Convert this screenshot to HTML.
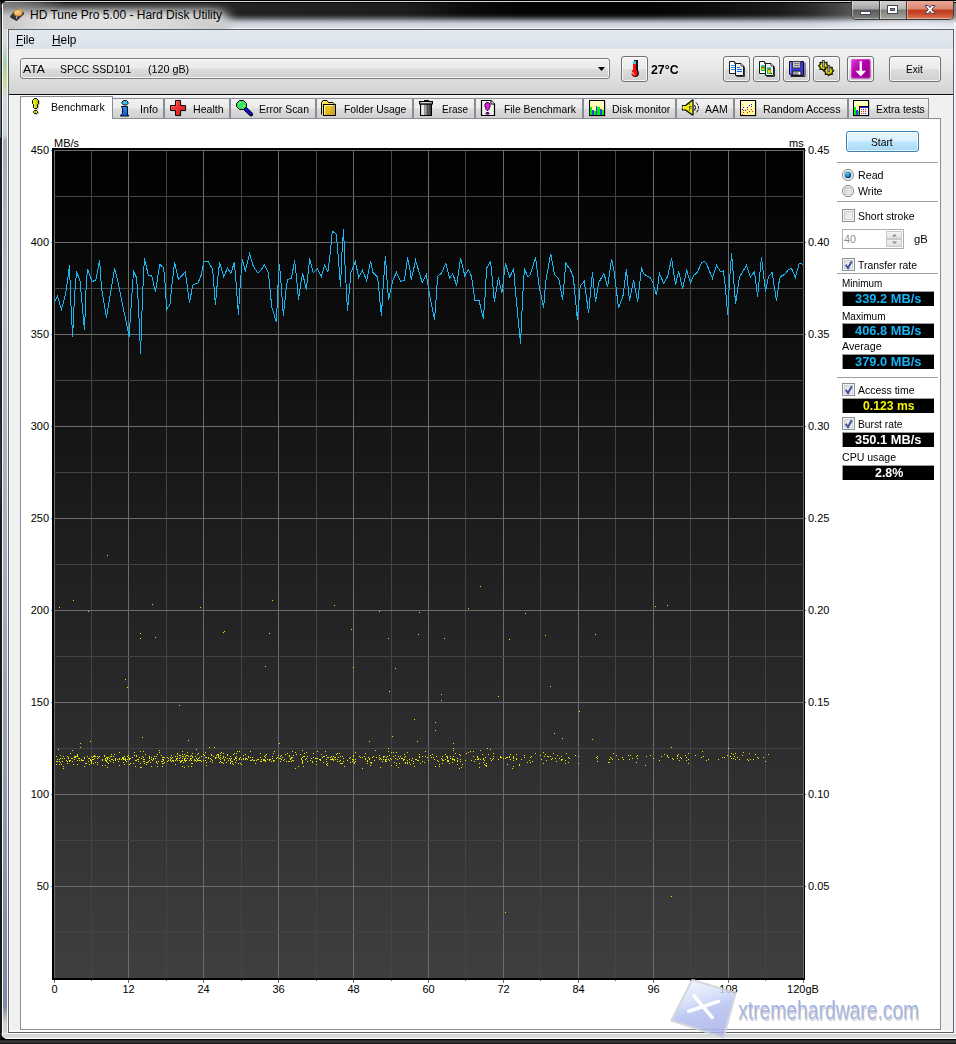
<!DOCTYPE html>
<html><head><meta charset="utf-8"><title>HD Tune Pro 5.00 - Hard Disk Utility</title>
<style>
*{box-sizing:border-box;margin:0;padding:0}
html,body{width:956px;height:1044px;overflow:hidden;background:#000}
body{position:relative;font-family:"Liberation Sans",sans-serif;font-size:11px;color:#000}
.a{position:absolute}
div{position:absolute;white-space:nowrap}
.ax{font-size:11px;line-height:14px;height:14px;color:#000}
.t{font-size:11px;line-height:13px;color:#000;letter-spacing:-0.15px}
.sep{height:1px;background:#a0a0a0;left:837px;width:101px}
.bb{left:842px;width:92px;height:15px;border-top:1px solid #9a9a9a;border-left:1px solid #9a9a9a;background:#000;text-align:center;font-weight:bold;font-size:12px;line-height:15px;letter-spacing:0.35px}
.cb{left:842px;width:13px;height:13px;border:1px solid #8e8f8f;background:#f4f4f4}
.cb i{position:absolute;left:1px;top:1px;width:9px;height:9px;border:1px solid #cfd0d0;background:linear-gradient(135deg,#dcdfe2,#f6f6f6)}
.tb{top:56px;width:27px;height:26px;border:1px solid #707070;border-radius:3px;background:linear-gradient(#f2f2f2 0,#ebebeb 48%,#dddddd 52%,#cfcfcf 100%);box-shadow:inset 0 0 0 1px rgba(255,255,255,.75)}
.tab{top:98px;height:20px;border:1px solid #898c95;border-bottom:none;background:linear-gradient(#f2f2f2 0,#ebebeb 48%,#dddddd 52%,#cfcfcf 100%)}
.tab span{position:absolute;top:3px;font-size:11px;line-height:13px;letter-spacing:-0.2px}
.tab svg{position:absolute;top:1px}
</style></head><body>

<!-- window glass frame -->
<div id="frame" style="left:1px;top:1px;width:970px;height:1038px;border-radius:7px 0 0 7px;background:#d4d6da;overflow:hidden">
  <!-- left border glass -->
  <div style="left:0;top:0;width:8px;height:1038px;background:linear-gradient(#cfcfcf 0,#d9dcd9 40px,#a9cfae 62px,#c9da8c 78px,#d3d8e2 98px,#cdd5e1 133px,#a6aebe 140px,#a9b1c0 175px,#b4bccb 300px,#aab2c2 520px,#8f99ad 840px,#7f8aa0 1005px,#d0d0d0 1022px,#d8d8d8 1038px)"></div>
  <div style="left:0;top:0;width:1px;height:1038px;background:#1c1c1c"></div>
  <div style="left:1px;top:0;width:1px;height:1038px;background:#fbfbfb"></div>
  <div style="left:6px;top:28px;width:1px;height:1004px;background:#f4f6f8"></div>
  <!-- title bar -->
  <div style="left:2px;top:0;width:968px;height:28px;background:linear-gradient(180deg,#d2d2d2 0,#d2d2d2 1px,#070707 1px,#070707 2px,rgba(0,0,0,0) 2px,rgba(0,0,0,0) 12.500px,rgba(208,214,225,.08) 14.500px,rgba(208,214,225,.38) 17.500px,rgba(208,214,225,.72) 20px,rgba(210,216,227,.95) 22.500px,#d4d9e3 25px,#d9dee7 27px,#f2f5f8 27px,#f2f5f8 28px),linear-gradient(90deg,#222 0,#222 250px,#1d1d1d 400px,#0b0b0b 468px,#040404 520px,#040404 650px,#0f0f0f 720px,#1a1a1a 775px,#2c2c2c 810px,#555 849px,#6a6a6a 870px,#8a8a8a 956px)"></div>
  <div style="left:790px;top:15px;width:180px;height:12px;background:radial-gradient(ellipse 100px 11px at 115px 12px,rgba(255,255,255,.6),rgba(255,255,255,.35) 55%,rgba(255,255,255,0) 100%)"></div>
  <!-- title text glow -->
  <svg class="a" style="left:2px;top:1px" width="300" height="27" viewBox="0 0 300 27"><defs><filter id="gb" x="-20%" y="-100%" width="140%" height="300%"><feGaussianBlur stdDeviation="6 4.6"/></filter><linearGradient id="gl" x1="0" y1="0" x2="1" y2="0"><stop offset="0" stop-color="#c2c2c2"/><stop offset=".14" stop-color="#c8c8c8"/><stop offset=".3" stop-color="#e2e2e2"/><stop offset=".6" stop-color="#e2e2e2"/><stop offset="1" stop-color="#cccccc"/></linearGradient></defs>
    <rect x="-30" y="8" width="256" height="44" rx="10" fill="url(#gl)" filter="url(#gb)"/>
    <rect x="-30" y="10" width="246" height="44" rx="10" fill="url(#gl)" opacity=".6" filter="url(#gb)"/>
  </svg>
  <div style="left:2px;top:1px;width:70px;height:14px;background:radial-gradient(ellipse 60px 13px at 4px 0,rgba(200,200,200,.55),rgba(200,200,200,.3) 55%,rgba(200,200,200,0) 100%)"></div>
  <div style="left:2px;top:0;width:968px;height:1px;background:#d8d8d8"></div>
  <!-- bottom glass -->
  <div style="left:2px;top:1032px;width:968px;height:6px;background:linear-gradient(#fafafa 0,#fafafa 1px,#d2d2d2 1px,#dedede 5px,#fdfdfd 5px)"></div>
</div>
<div style="left:0;top:1040px;width:956px;height:4px;background:linear-gradient(#2b2b2b,#3a3a3a 50%,#111)"></div>
<div style="left:0;top:2px;width:1px;height:1038px;background:linear-gradient(#3a3a3a 0,#6e737a 30px,#6a7078 135px,#1e1e1e 136px,#262626 400px,#3c3c3c 470px,#161616 520px,#161616 1038px)"></div>

<!-- title icon + text -->
<svg class="a" style="left:8px;top:6px" width="20" height="18" viewBox="8 6 20 18">
  <path d="M10.200 16.200 L16.400 9.300 L24 12.700 L23.600 14.400 L16.600 20.900 L10.400 17.600z" fill="#26262c"/>
  <path d="M10.200 16.200 L16.400 9.300 L24 12.700 L16.800 19.300z" fill="#3a3a42"/>
  <ellipse cx="18.100" cy="12.800" rx="4.100" ry="3.300" fill="#f2b24e"/>
  <ellipse cx="17.300" cy="12.200" rx="2.300" ry="1.700" fill="#fbd58a" opacity=".7"/>
  <ellipse cx="18.100" cy="12.800" rx="4.100" ry="3.300" fill="none" stroke="#c98a30" stroke-width=".6"/>
  <ellipse cx="18" cy="12.600" rx="1.200" ry=".95" fill="#c9cbe0"/>
  <path d="M15.700 18.900 L16.300 15.900 L17.500 16.300 L17 19.300z" fill="#a8a0a6"/>
</svg>

<!-- caption buttons -->
<div style="left:851px;top:1px;width:103px;height:19px;border:1px solid #3a3a3a;border-top:none;border-radius:0 0 5px 5px;overflow:hidden;background:#888">
  <div style="left:0;top:0;width:28px;height:18px;background:linear-gradient(#c9c9c9 0,#a4a4a4 8px,#5b5b5b 9px,#7d7d7d 18px);border-right:1px solid #3d3d3d;box-shadow:inset 1px 0 0 rgba(255,255,255,.45),inset 0 -1px 0 rgba(255,255,255,.35)"></div>
  <div style="left:28px;top:0;width:27px;height:18px;background:linear-gradient(#d2d2d0 0,#b4b4b0 8px,#7f7f7a 9px,#a5a5a0 18px);border-right:1px solid #3d3d3d;box-shadow:inset 1px 0 0 rgba(255,255,255,.45),inset 0 -1px 0 rgba(255,255,255,.35)"></div>
  <div style="left:55px;top:0;width:47px;height:18px;background:linear-gradient(#eba898 0,#dc8872 8px,#c23a1e 9px,#c84a2c 13px,#dc7a56 18px);box-shadow:inset 1px 0 0 rgba(255,255,255,.4),inset -1px 0 0 rgba(255,255,255,.3),inset 0 -1px 0 rgba(255,255,255,.4)"></div>
</div>
<svg class="a" style="left:851px;top:1px" width="103" height="19" viewBox="0 0 103 19">
  <rect x="9.5" y="10.5" width="10" height="3" fill="#fff" stroke="#45475a" stroke-width="1"/>
  <rect x="36.500" y="4.500" width="10" height="8" fill="#fff" stroke="#45475a" stroke-width="1"/>
  <rect x="39.500" y="7.500" width="4" height="2" fill="#8a8a86" stroke="#45475a" stroke-width="1"/>
  <path d="M74 4.500h3.300l1.700 2.200 1.700-2.200h3.300l-3.300 4 3.300 4h-3.300l-1.700-2.200-1.700 2.200h-3.300l3.300-4z" fill="#fff" stroke="#45475a" stroke-width="1"/>
</svg>

<div style="left:954px;top:22px;width:2px;height:1011px;background:linear-gradient(90deg,#f6f8fb 0,#f6f8fb 1px,#e4e8ee 1px)"></div>
<!-- client area -->
<div style="left:8px;top:29px;width:946px;height:1004px;background:#5e6268"></div>
<div id="client" style="left:9px;top:30px;width:944px;height:1002px;background:#f0f0f0"></div>
<div style="left:9px;top:1030px;width:944px;height:2px;background:#fbfbfb"></div>
<div style="left:9px;top:96px;width:1px;height:936px;background:rgba(255,255,255,.75)"></div>
<!-- menu -->
<div style="left:9px;top:30px;width:944px;height:19px;background:linear-gradient(#e3e8ef 0,#dfe5ed 60%,#dce2eb 100%)"></div>
<!-- toolbar -->
<div style="left:9px;top:49px;width:944px;height:45px;background:linear-gradient(#f1f1f1 0,#ececec 30%,#dbdbdb 75%,#d2d2d2 100%)"></div>
<div style="left:9px;top:94px;width:944px;height:1px;background:#0c0c0c"></div>
<div style="left:9px;top:95px;width:944px;height:1px;background:#fafafa"></div>

<!-- combo -->
<div style="left:20px;top:58px;width:590px;height:21px;border:1px solid #7d7d7d;border-radius:3px;background:linear-gradient(#f2f2f2 0,#ebebeb 48%,#dddddd 52%,#cfcfcf 100%);box-shadow:inset 0 0 0 1px rgba(255,255,255,.8)"></div>
<svg class="a" style="left:597px;top:66px" width="9" height="6"><path d="M1 1h7l-3.500 4z" fill="#000"/></svg>

<!-- temp button -->
<div class="tb" style="left:621px"></div>

<!-- toolbar buttons -->
<div class="tb" style="left:723px"></div>
<div class="tb" style="left:753px"></div>
<div class="tb" style="left:783px"></div>
<div class="tb" style="left:813px"></div>
<div class="tb" style="left:847px"></div>
<div class="tb" style="left:889px;width:52px"></div>
<svg class="a" style="left:600px;top:50px" width="356" height="40" viewBox="600 50 356 40">
<defs><linearGradient id="pg" x1="0" y1="0" x2="1" y2="1"><stop offset="0" stop-color="#e040d8"/><stop offset=".45" stop-color="#b400ac"/><stop offset="1" stop-color="#8c0088"/></linearGradient></defs>
<g><rect x="634" y="60" width="4" height="12" fill="#141414"/><circle cx="635.300" cy="73.300" r="3.700" fill="#141414"/><rect x="633" y="61" width="3" height="3" fill="#38ccd8"/><rect x="633" y="64" width="3" height="7" fill="#ee1010"/><circle cx="634.400" cy="73" r="3.200" fill="#ee1010"/><rect x="631" y="71" width="1" height="3" fill="#8adfe6"/><path d="M632.600 72.200q.3 1.800 2 2.100" stroke="#fff" stroke-width="1" fill="none"/></g>
<g transform="translate(729 61)"><path d="M7.500 15.500h8v-10" fill="none" stroke="#3a3a3a" stroke-width="1"/><path d="M0.500 0.500h5l2 2v10h-7z" fill="#fdfdfd" stroke="#161616" stroke-width="1"/><path d="M5.500 0.500v2h2" fill="#ddd" stroke="#161616" stroke-width=".8"/><g shape-rendering="crispEdges"><rect x="2" y="4" width="4" height="1" fill="#1e90ff"/><rect x="2" y="6" width="4" height="1" fill="#1e90ff"/><rect x="2" y="8" width="4" height="1" fill="#1e90ff"/></g><path d="M6.500 2.500h5.500l2.500 2.500v9.500h-8z" fill="#efefef" stroke="#161616" stroke-width="1"/><path d="M12 2.500v2.500h2.500" fill="#fff" stroke="#161616" stroke-width=".8"/><g shape-rendering="crispEdges"><rect x="8" y="6" width="3" height="1" fill="#0a64ff"/><rect x="8" y="8" width="5" height="1" fill="#0a64ff"/><rect x="8" y="10" width="5" height="1" fill="#0a64ff"/></g></g>
<g transform="translate(759 61)"><path d="M7.500 15.500h8v-10" fill="none" stroke="#3a3a3a" stroke-width="1"/><path d="M0.500 0.500h5l2 2v10h-7z" fill="#fdfdfd" stroke="#161616" stroke-width="1"/><path d="M5.500 0.500v2h2" fill="#ddd" stroke="#161616" stroke-width=".8"/><g shape-rendering="crispEdges"><rect x="2" y="4" width="4" height="1" fill="#28c8f0"/><rect x="2" y="5" width="4" height="5" fill="#28c838"/><rect x="3" y="6" width="2" height="1" fill="#e81818"/><rect x="3" y="7" width="2" height="2" fill="#e8d818"/></g><path d="M6.500 2.500h5.500l2.500 2.500v9.500h-8z" fill="#efefef" stroke="#161616" stroke-width="1"/><path d="M12 2.500v2.500h2.500" fill="#fff" stroke="#161616" stroke-width=".8"/><g shape-rendering="crispEdges"><rect x="8" y="6" width="4" height="1" fill="#28c8f0"/><rect x="8" y="7" width="4" height="6" fill="#28c838"/><rect x="9" y="8" width="2" height="1" fill="#e81818"/><rect x="9" y="9" width="2" height="3" fill="#e8d818"/><rect x="12" y="12" width="1" height="1" fill="#000"/></g></g>
<g><path d="M790.500 76.500h14.500v-14" fill="none" stroke="#2a2a2a" stroke-width="1"/><path d="M789.500 61.500h14v14h-12.500l-1.500-1.500z" fill="#3434fa" stroke="#0c0c20" stroke-width="1"/><rect x="790" y="62" width="1.200" height="11" fill="#8a8aff"/><rect x="792.500" y="61.500" width="8" height="6.500" fill="#c6c6c6" stroke="#3a3a3a" stroke-width="1"/><path d="M794 63.500h5.500M794 65.500h5.500" stroke="#7c7c7c" stroke-width="1"/><rect x="792.500" y="71" width="8.500" height="4" fill="#9c9c9c" stroke="#1c1c1c" stroke-width=".8"/><rect x="798.500" y="72" width="1.600" height="2.600" fill="#fff"/></g>
<g><polygon points="828.40,65.80 826.73,67.14 826.96,69.26 824.84,69.03 823.50,70.70 822.16,69.03 820.04,69.26 820.27,67.14 818.60,65.80 820.27,64.46 820.04,62.34 822.16,62.57 823.50,60.90 824.84,62.57 826.96,62.34 826.73,64.46" fill="#ecec10" stroke="#1a1a00" stroke-width="1.300" stroke-linejoin="round"/><polygon points="833.70,70.80 832.03,72.14 832.26,74.26 830.14,74.03 828.80,75.70 827.46,74.03 825.34,74.26 825.57,72.14 823.90,70.80 825.57,69.46 825.34,67.34 827.46,67.57 828.80,65.90 830.14,67.57 832.26,67.34 832.03,69.46" fill="#ecec10" stroke="#1a1a00" stroke-width="1.300" stroke-linejoin="round"/><rect x="822.500" y="60.500" width="2" height="6.500" fill="#a8a8a8" stroke="#333" stroke-width=".7"/><rect x="827.800" y="65.500" width="2" height="6.500" fill="#a8a8a8" stroke="#333" stroke-width=".7"/></g>
<g><rect x="851" y="59" width="19.500" height="19.500" rx="2" fill="url(#pg)"/><rect x="851.500" y="59.500" width="18.500" height="18.500" rx="2" fill="none" stroke="#f070e8" stroke-width=".8" opacity=".6"/><path d="M859.600 61.300h2.300v9.500h4.200l-5.350 5.600-5.350-5.600h4.200z" fill="#fff"/></g>
</svg>

<!-- tab pane -->
<div style="left:20px;top:118px;width:921px;height:912px;border:1px solid #898c95;background:#fff"></div>
<!-- tabs -->
<div class="tab" style="left:112px;width:52px"></div>
<div class="tab" style="left:164px;width:66px"></div>
<div class="tab" style="left:230px;width:86px"></div>
<div class="tab" style="left:316px;width:97px"></div>
<div class="tab" style="left:413px;width:62px"></div>
<div class="tab" style="left:475px;width:108px"></div>
<div class="tab" style="left:583px;width:93px"></div>
<div class="tab" style="left:676px;width:58px"></div>
<div class="tab" style="left:734px;width:114px"></div>
<div class="tab" style="left:848px;width:81px"></div>
<div class="tab" style="left:20px;top:96px;width:93px;height:23px;background:#fff"></div>
<svg class="a" style="left:0;top:90px" width="956" height="32" viewBox="0 90 956 32">
<defs><linearGradient id="gy" x1="0" y1="0" x2="1" y2="0"><stop offset="0" stop-color="#f4f430"/><stop offset=".45" stop-color="#e4e400"/><stop offset="1" stop-color="#b4b400"/></linearGradient><linearGradient id="gbl" x1="0" y1="0" x2="0" y2="1"><stop offset="0" stop-color="#1898ff"/><stop offset="1" stop-color="#0058e8"/></linearGradient><linearGradient id="grd" x1="0" y1="0" x2="1" y2="1"><stop offset="0" stop-color="#ff4848"/><stop offset="1" stop-color="#d41818"/></linearGradient><linearGradient id="gfo" x1="0" y1="0" x2="1" y2="1"><stop offset="0" stop-color="#f2d428"/><stop offset="1" stop-color="#d89c10"/></linearGradient><linearGradient id="gtr" x1="0" y1="0" x2="1" y2="0"><stop offset="0" stop-color="#b4b4b4"/><stop offset=".22" stop-color="#fafafa"/><stop offset=".5" stop-color="#8e8e8e"/><stop offset="1" stop-color="#2a2a2a"/></linearGradient><linearGradient id="gyl" x1="0" y1="0" x2="0" y2="1"><stop offset="0" stop-color="#ffffc8"/><stop offset="1" stop-color="#fff690"/></linearGradient></defs>
<g><path d="M35.5 99.5h2l2 2v3l-1 1v3l-1 1h-2l-1-1v-3l-1-1v-3z" fill="#9a9a9a" stroke="#9a9a9a" stroke-width="1" opacity=".6"/><path d="M34.5 98.5h2l2 2v3l-1 1v3l-1 1h-2l-1-1v-3l-1-1v-3z" fill="url(#gy)" stroke="#000" stroke-width="1"/><path d="M35.5 111.5h2l1 1v1l-1 1h-2l-1-1v-1z" fill="#9a9a9a" stroke="#9a9a9a" opacity=".6"/><path d="M34.5 110.500h2l1 1v1l-1 1h-2l-1-1v-1z" fill="#d8d800" stroke="#000" stroke-width="1"/></g>
<g><path d="M123.500 100.500h3l1.500 1.500v1.500l-1.500 1.500h-3l-1.500-1.500v-1.500z" fill="#28c4f4" stroke="#1a0c00" stroke-width="1"/><path d="M121.500 106.500h6v8.500h1v1h-8v-.8l2-1.700v-5.500l-1-.7z" fill="url(#gbl)" stroke="#100800" stroke-width="1" stroke-linejoin="round"/></g>
<path d="M176.500 101.500h5v5h5v5h-5v5h-5v-5h-5v-5h5z" fill="#8a8a8a" opacity=".45"/><path d="M175.500 100.500h5v5h5v5h-5v5h-5v-5h-5v-5h5z" fill="url(#grd)" stroke="#0a0a0a" stroke-width="1"/><path d="M176.500 105.500v-4h1.500M171.500 109v-2.500h4" fill="none" stroke="#ff7a7a" stroke-width=".8" opacity=".8"/>
<g><path d="M245.500 109l5.500 5.200" stroke="#000" stroke-width="4.200" stroke-linecap="round"/><path d="M245.500 108.800l5.200 5" stroke="#1212e6" stroke-width="2.300" stroke-linecap="round"/><path d="M239.500 100.500h4l3 3v3l-3 3h-4l-3-3v-3z" fill="#38e458" stroke="#000" stroke-width="1"/><path d="M239.500 103.500l1.500-1.500M242.500 107.500l2.500-2.500" stroke="#c8ffd0" stroke-width=".9"/></g>
<g><path d="M321.500 114.500v-12l1.500-2h4l1.500 2h4.500l1 1v2" fill="#f6e45a" stroke="#000" stroke-width="1"/><rect x="323.500" y="104.500" width="12" height="11" fill="url(#gfo)" stroke="#000" stroke-width="1"/><rect x="324" y="105" width="1" height="10" fill="#fff8c0"/><rect x="324" y="105" width="11" height="1" fill="#fff0a0"/><rect x="333" y="105" width="1" height="10" fill="#a89c80"/></g>
<g><rect x="424.500" y="100.500" width="4" height="2" fill="#555" stroke="#000"/><rect x="420.500" y="104" width="11" height="11.500" fill="url(#gtr)" stroke="#000" stroke-width="1"/><rect x="419.500" y="101.500" width="13" height="2.500" fill="#9c9c9c" stroke="#000" stroke-width="1"/><rect x="421" y="102" width="9" height="1" fill="#d8d8d8"/><rect x="424" y="105" width="1" height="10" fill="#707070" opacity=".6"/><rect x="427" y="105" width="1" height="10" fill="#303030" opacity=".5"/></g>
<g><path d="M482.500 101.500h9.500l3 3v11h-12.500z" fill="#9a9a9a" opacity=".5"/><path d="M481.500 100.500h9.500l3.500 3.500v11.500h-13z" fill="#f2f2f2" stroke="#000" stroke-width="1.200"/><path d="M491 100.500v3.500h3.500" fill="#fff" stroke="#000" stroke-width="1"/><path d="M486.500 102.500h2l1.500 1.500v3l-1 1v1.500l-1 1h-1l-1-1v-1.500l-1-1v-3z" fill="#f018e0" stroke="#1a0a30" stroke-width="1"/><path d="M486.500 112.500h2l.8.800-.8.900h-2l-.8-.9z" fill="#f018e0" stroke="#1a0a30" stroke-width="1"/></g>
<g shape-rendering="crispEdges">
<rect x="590" y="101" width="16" height="16" fill="#9a9a9a" opacity=".5"/>
<rect x="589" y="100" width="16" height="16" fill="#000"/>
<rect x="590" y="101" width="14" height="14" fill="url(#gyl)"/>
<rect x="590" y="107" width="2" height="8" fill="#00f400"/>
<rect x="592" y="110" width="2" height="5" fill="#3838ff"/>
<rect x="594" y="111" width="2" height="4" fill="#00f400"/>
<rect x="596" y="106" width="1" height="9" fill="#3838ff"/>
<rect x="597" y="107" width="3" height="8" fill="#00f400"/>
<rect x="600" y="109" width="2" height="6" fill="#3838ff"/>
<rect x="602" y="110" width="2" height="5" fill="#00f400"/>
</g>
<g><path d="M682.500 105.500h3l7-5.500h.5v15h-.5l-7-5h-3z" fill="#f0ea00" stroke="#000" stroke-width="1.200" stroke-linejoin="round"/><path d="M689.500 103v9.500" stroke="#555" stroke-width=".8" stroke-dasharray="2 1"/><ellipse cx="683.300" cy="107.500" rx=".8" ry="1.800" fill="#ffffa0"/><rect x="689.500" y="106.500" width="1.500" height="2" fill="#ddd" stroke="#222" stroke-width=".5"/><path d="M694.500 105q2.200 2.500 0 5.500" fill="none" stroke="#000" stroke-width="1"/><path d="M696 102.500q5 5 0 10.500" fill="none" stroke="#000" stroke-width="1" stroke-dasharray="3 1"/></g>
<g shape-rendering="crispEdges">
<rect x="741" y="101" width="16" height="16" fill="#9a9a9a" opacity=".5"/>
<rect x="740" y="100" width="16" height="16" fill="#000"/>
<rect x="741" y="101" width="14" height="14" fill="url(#gyl)"/>
<rect x="743" y="107" width="1" height="1" fill="#1414ff"/>
<rect x="742" y="109" width="1" height="1" fill="#1414ff"/>
<rect x="745" y="110" width="1" height="1" fill="#1414ff"/>
<rect x="747" y="107" width="1" height="1" fill="#1414ff"/>
<rect x="749" y="105" width="1" height="1" fill="#1414ff"/>
<rect x="751" y="104" width="1" height="1" fill="#1414ff"/>
<rect x="751" y="106" width="1" height="1" fill="#1414ff"/>
<rect x="743" y="110" width="1" height="1" fill="#ff1414"/>
<rect x="743" y="112" width="1" height="1" fill="#ff1414"/>
<rect x="742" y="114" width="1" height="1" fill="#ff1414"/>
<rect x="747" y="109" width="1" height="1" fill="#ff1414"/>
<rect x="747" y="112" width="1" height="1" fill="#ff1414"/>
<rect x="749" y="111" width="1" height="1" fill="#ff1414"/>
<rect x="751" y="109" width="1" height="1" fill="#ff1414"/>
<rect x="752" y="111" width="1" height="1" fill="#ff1414"/>
</g>
<g shape-rendering="crispEdges">
<rect x="854" y="101" width="16" height="16" fill="#9a9a9a" opacity=".5"/>
<rect x="853" y="100" width="16" height="16" fill="#000"/>
<rect x="854" y="101" width="14" height="14" fill="url(#gyl)"/>
<rect x="854" y="107" width="2" height="8" fill="#00f400"/>
<rect x="856" y="110" width="2" height="5" fill="#3838ff"/>
<rect x="858" y="111" width="1" height="4" fill="#00f400"/>
<rect x="859" y="106" width="10" height="10" fill="#000"/>
<rect x="860" y="107" width="8" height="1" fill="#1c1cf0"/>
<rect x="860" y="108" width="8" height="7" fill="#f4f4f4"/>
<rect x="861" y="109" width="1" height="1" fill="#ff1414"/>
<rect x="863" y="109" width="1" height="1" fill="#1414ff"/>
<rect x="865" y="109" width="1" height="1" fill="#ff1414"/>
<rect x="861" y="111" width="1" height="1" fill="#14c814"/>
<rect x="863" y="111" width="1" height="1" fill="#ff1414"/>
<rect x="865" y="111" width="1" height="1" fill="#ff1414"/>
<rect x="861" y="113" width="1" height="1" fill="#ff1414"/>
<rect x="863" y="113" width="1" height="1" fill="#ff1414"/>
<rect x="865" y="113" width="1" height="1" fill="#1414ff"/>
</g>
</svg>

<svg id="chart" width="956" height="1044" viewBox="0 0 956 1044" style="position:absolute;left:0;top:0" shape-rendering="crispEdges">
<defs><linearGradient id="cg" x1="0" y1="0" x2="0" y2="1"><stop offset="0" stop-color="#000"/><stop offset="1" stop-color="#3f3f3f"/></linearGradient></defs>
<rect x="52" y="148" width="753" height="832" fill="#000"/>
<rect x="54" y="150" width="750" height="828" fill="url(#cg)"/>
<rect x="54" y="150" width="1" height="828" fill="#6c6c6c"/>
<rect x="54" y="980" width="1" height="3" fill="#6c6c6c"/>
<rect x="91" y="150" width="1" height="828" fill="#444444"/>
<rect x="91" y="980" width="1" height="1" fill="#6c6c6c"/>
<rect x="128" y="150" width="1" height="828" fill="#6c6c6c"/>
<rect x="128" y="980" width="1" height="3" fill="#6c6c6c"/>
<rect x="166" y="150" width="1" height="828" fill="#444444"/>
<rect x="166" y="980" width="1" height="1" fill="#6c6c6c"/>
<rect x="203" y="150" width="1" height="828" fill="#6c6c6c"/>
<rect x="203" y="980" width="1" height="3" fill="#6c6c6c"/>
<rect x="241" y="150" width="1" height="828" fill="#444444"/>
<rect x="241" y="980" width="1" height="1" fill="#6c6c6c"/>
<rect x="278" y="150" width="1" height="828" fill="#6c6c6c"/>
<rect x="278" y="980" width="1" height="3" fill="#6c6c6c"/>
<rect x="316" y="150" width="1" height="828" fill="#444444"/>
<rect x="316" y="980" width="1" height="1" fill="#6c6c6c"/>
<rect x="353" y="150" width="1" height="828" fill="#6c6c6c"/>
<rect x="353" y="980" width="1" height="3" fill="#6c6c6c"/>
<rect x="391" y="150" width="1" height="828" fill="#444444"/>
<rect x="391" y="980" width="1" height="1" fill="#6c6c6c"/>
<rect x="428" y="150" width="1" height="828" fill="#6c6c6c"/>
<rect x="428" y="980" width="1" height="3" fill="#6c6c6c"/>
<rect x="465" y="150" width="1" height="828" fill="#444444"/>
<rect x="465" y="980" width="1" height="1" fill="#6c6c6c"/>
<rect x="503" y="150" width="1" height="828" fill="#6c6c6c"/>
<rect x="503" y="980" width="1" height="3" fill="#6c6c6c"/>
<rect x="540" y="150" width="1" height="828" fill="#444444"/>
<rect x="540" y="980" width="1" height="1" fill="#6c6c6c"/>
<rect x="578" y="150" width="1" height="828" fill="#6c6c6c"/>
<rect x="578" y="980" width="1" height="3" fill="#6c6c6c"/>
<rect x="615" y="150" width="1" height="828" fill="#444444"/>
<rect x="615" y="980" width="1" height="1" fill="#6c6c6c"/>
<rect x="653" y="150" width="1" height="828" fill="#6c6c6c"/>
<rect x="653" y="980" width="1" height="3" fill="#6c6c6c"/>
<rect x="690" y="150" width="1" height="828" fill="#444444"/>
<rect x="690" y="980" width="1" height="1" fill="#6c6c6c"/>
<rect x="728" y="150" width="1" height="828" fill="#6c6c6c"/>
<rect x="728" y="980" width="1" height="3" fill="#6c6c6c"/>
<rect x="765" y="150" width="1" height="828" fill="#444444"/>
<rect x="765" y="980" width="1" height="1" fill="#6c6c6c"/>
<rect x="803" y="150" width="1" height="828" fill="#6c6c6c"/>
<rect x="803" y="980" width="1" height="3" fill="#6c6c6c"/>
<rect x="54" y="150" width="750" height="1" fill="#6c6c6c"/>
<rect x="51" y="150" width="1" height="1" fill="#6c6c6c"/>
<rect x="805" y="150" width="1" height="1" fill="#6c6c6c"/>
<rect x="54" y="196" width="750" height="1" fill="#444444"/>
<rect x="54" y="242" width="750" height="1" fill="#6c6c6c"/>
<rect x="51" y="242" width="1" height="1" fill="#6c6c6c"/>
<rect x="805" y="242" width="1" height="1" fill="#6c6c6c"/>
<rect x="54" y="288" width="750" height="1" fill="#444444"/>
<rect x="54" y="334" width="750" height="1" fill="#6c6c6c"/>
<rect x="51" y="334" width="1" height="1" fill="#6c6c6c"/>
<rect x="805" y="334" width="1" height="1" fill="#6c6c6c"/>
<rect x="54" y="380" width="750" height="1" fill="#444444"/>
<rect x="54" y="426" width="750" height="1" fill="#6c6c6c"/>
<rect x="51" y="426" width="1" height="1" fill="#6c6c6c"/>
<rect x="805" y="426" width="1" height="1" fill="#6c6c6c"/>
<rect x="54" y="472" width="750" height="1" fill="#444444"/>
<rect x="54" y="518" width="750" height="1" fill="#6c6c6c"/>
<rect x="51" y="518" width="1" height="1" fill="#6c6c6c"/>
<rect x="805" y="518" width="1" height="1" fill="#6c6c6c"/>
<rect x="54" y="564" width="750" height="1" fill="#444444"/>
<rect x="54" y="610" width="750" height="1" fill="#6c6c6c"/>
<rect x="51" y="610" width="1" height="1" fill="#6c6c6c"/>
<rect x="805" y="610" width="1" height="1" fill="#6c6c6c"/>
<rect x="54" y="656" width="750" height="1" fill="#444444"/>
<rect x="54" y="702" width="750" height="1" fill="#6c6c6c"/>
<rect x="51" y="702" width="1" height="1" fill="#6c6c6c"/>
<rect x="805" y="702" width="1" height="1" fill="#6c6c6c"/>
<rect x="54" y="748" width="750" height="1" fill="#444444"/>
<rect x="54" y="794" width="750" height="1" fill="#6c6c6c"/>
<rect x="51" y="794" width="1" height="1" fill="#6c6c6c"/>
<rect x="805" y="794" width="1" height="1" fill="#6c6c6c"/>
<rect x="54" y="840" width="750" height="1" fill="#444444"/>
<rect x="54" y="886" width="750" height="1" fill="#6c6c6c"/>
<rect x="51" y="886" width="1" height="1" fill="#6c6c6c"/>
<rect x="805" y="886" width="1" height="1" fill="#6c6c6c"/>
<rect x="54" y="932" width="750" height="1" fill="#444444"/>
<path d="M56 756h1v1h-1zM56 761h1v1h-1zM56 764h1v1h-1zM57 759h1v1h-1zM57 761h1v1h-1zM58 749h1v1h-1zM59 607h1v1h-1zM59 759h1v1h-1zM59 761h1v1h-1zM59 764h1v1h-1zM60 755h1v1h-1zM60 758h1v1h-1zM60 762h1v1h-1zM61 764h1v1h-1zM62 758h1v1h-1zM62 761h1v1h-1zM63 756h1v1h-1zM63 766h1v1h-1zM63 768h1v1h-1zM64 758h1v1h-1zM66 760h1v1h-1zM67 756h1v1h-1zM67 761h1v1h-1zM67 763h1v1h-1zM68 757h1v1h-1zM68 758h1v1h-1zM69 760h1v1h-1zM69 761h1v1h-1zM70 753h1v1h-1zM70 760h1v1h-1zM71 758h1v1h-1zM72 750h1v1h-1zM72 758h1v1h-1zM72 761h1v1h-1zM73 600h1v1h-1zM73 764h1v1h-1zM74 756h1v1h-1zM74 757h1v1h-1zM74 759h1v1h-1zM75 756h1v1h-1zM75 757h1v1h-1zM76 756h1v1h-1zM77 754h1v1h-1zM77 755h1v1h-1zM77 756h1v1h-1zM77 760h1v1h-1zM77 764h1v1h-1zM78 758h1v1h-1zM79 758h1v1h-1zM79 760h1v1h-1zM80 743h1v1h-1zM80 747h1v1h-1zM81 759h1v1h-1zM81 760h1v1h-1zM82 760h1v1h-1zM83 760h1v1h-1zM84 757h1v1h-1zM84 758h1v1h-1zM84 766h1v1h-1zM85 763h1v1h-1zM86 763h1v1h-1zM87 756h1v1h-1zM88 611h1v1h-1zM88 758h1v1h-1zM88 761h1v1h-1zM89 758h1v1h-1zM89 764h1v1h-1zM90 741h1v1h-1zM90 759h1v1h-1zM90 760h1v1h-1zM91 756h1v1h-1zM91 760h1v1h-1zM91 761h1v1h-1zM91 762h1v1h-1zM91 763h1v1h-1zM92 757h1v1h-1zM92 759h1v1h-1zM93 756h1v1h-1zM93 759h1v1h-1zM93 763h1v1h-1zM94 755h1v1h-1zM94 756h1v1h-1zM94 758h1v1h-1zM95 756h1v1h-1zM95 762h1v1h-1zM97 756h1v1h-1zM97 758h1v1h-1zM97 762h1v1h-1zM97 764h1v1h-1zM98 757h1v1h-1zM99 756h1v1h-1zM102 759h1v1h-1zM102 760h1v1h-1zM102 765h1v1h-1zM104 755h1v1h-1zM104 756h1v1h-1zM105 758h1v1h-1zM105 759h1v1h-1zM105 760h1v1h-1zM105 765h1v1h-1zM106 757h1v1h-1zM106 760h1v1h-1zM106 761h1v1h-1zM107 555h1v1h-1zM107 757h1v1h-1zM107 758h1v1h-1zM107 759h1v1h-1zM107 762h1v1h-1zM107 767h1v1h-1zM108 757h1v1h-1zM108 763h1v1h-1zM109 758h1v1h-1zM109 760h1v1h-1zM110 756h1v1h-1zM110 761h1v1h-1zM111 754h1v1h-1zM111 756h1v1h-1zM111 759h1v1h-1zM112 759h1v1h-1zM113 756h1v1h-1zM113 760h1v1h-1zM113 762h1v1h-1zM114 754h1v1h-1zM115 758h1v1h-1zM115 759h1v1h-1zM115 760h1v1h-1zM117 759h1v1h-1zM118 761h1v1h-1zM119 752h1v1h-1zM119 758h1v1h-1zM119 759h1v1h-1zM119 765h1v1h-1zM121 759h1v1h-1zM122 757h1v1h-1zM122 758h1v1h-1zM123 757h1v1h-1zM123 758h1v1h-1zM123 759h1v1h-1zM123 762h1v1h-1zM124 756h1v1h-1zM124 759h1v1h-1zM124 764h1v1h-1zM125 679h1v1h-1zM125 758h1v1h-1zM125 759h1v1h-1zM125 760h1v1h-1zM126 761h1v1h-1zM127 687h1v1h-1zM127 756h1v1h-1zM127 759h1v1h-1zM128 755h1v1h-1zM128 757h1v1h-1zM129 758h1v1h-1zM129 759h1v1h-1zM129 764h1v1h-1zM130 758h1v1h-1zM130 763h1v1h-1zM132 757h1v1h-1zM133 763h1v1h-1zM134 752h1v1h-1zM134 755h1v1h-1zM135 760h1v1h-1zM135 766h1v1h-1zM136 755h1v1h-1zM136 756h1v1h-1zM136 760h1v1h-1zM137 759h1v1h-1zM138 759h1v1h-1zM138 761h1v1h-1zM139 757h1v1h-1zM140 633h1v1h-1zM140 638h1v1h-1zM140 751h1v1h-1zM140 763h1v1h-1zM140 767h1v1h-1zM141 758h1v1h-1zM141 767h1v1h-1zM142 737h1v1h-1zM142 756h1v1h-1zM143 751h1v1h-1zM143 757h1v1h-1zM143 759h1v1h-1zM143 761h1v1h-1zM144 759h1v1h-1zM144 761h1v1h-1zM144 763h1v1h-1zM145 754h1v1h-1zM146 762h1v1h-1zM146 764h1v1h-1zM147 762h1v1h-1zM148 761h1v1h-1zM149 756h1v1h-1zM149 757h1v1h-1zM149 758h1v1h-1zM149 760h1v1h-1zM150 762h1v1h-1zM151 757h1v1h-1zM151 759h1v1h-1zM151 766h1v1h-1zM152 604h1v1h-1zM152 760h1v1h-1zM153 758h1v1h-1zM153 759h1v1h-1zM154 756h1v1h-1zM155 637h1v1h-1zM155 758h1v1h-1zM156 756h1v1h-1zM156 761h1v1h-1zM156 762h1v1h-1zM157 754h1v1h-1zM157 763h1v1h-1zM157 766h1v1h-1zM158 761h1v1h-1zM159 750h1v1h-1zM159 752h1v1h-1zM161 755h1v1h-1zM161 761h1v1h-1zM162 757h1v1h-1zM162 759h1v1h-1zM162 761h1v1h-1zM162 763h1v1h-1zM162 766h1v1h-1zM163 757h1v1h-1zM163 759h1v1h-1zM163 760h1v1h-1zM163 763h1v1h-1zM164 757h1v1h-1zM164 762h1v1h-1zM167 757h1v1h-1zM167 761h1v1h-1zM168 758h1v1h-1zM168 760h1v1h-1zM170 757h1v1h-1zM170 759h1v1h-1zM170 760h1v1h-1zM171 755h1v1h-1zM171 758h1v1h-1zM171 761h1v1h-1zM172 757h1v1h-1zM172 760h1v1h-1zM173 760h1v1h-1zM173 761h1v1h-1zM175 756h1v1h-1zM175 760h1v1h-1zM175 764h1v1h-1zM176 758h1v1h-1zM176 759h1v1h-1zM177 753h1v1h-1zM177 754h1v1h-1zM177 756h1v1h-1zM177 758h1v1h-1zM177 760h1v1h-1zM179 705h1v1h-1zM179 755h1v1h-1zM179 758h1v1h-1zM179 760h1v1h-1zM180 755h1v1h-1zM180 757h1v1h-1zM180 761h1v1h-1zM180 762h1v1h-1zM181 760h1v1h-1zM181 761h1v1h-1zM182 751h1v1h-1zM182 754h1v1h-1zM182 756h1v1h-1zM182 758h1v1h-1zM182 760h1v1h-1zM182 766h1v1h-1zM183 756h1v1h-1zM183 762h1v1h-1zM184 754h1v1h-1zM184 758h1v1h-1zM184 759h1v1h-1zM184 760h1v1h-1zM184 767h1v1h-1zM185 756h1v1h-1zM185 758h1v1h-1zM185 760h1v1h-1zM185 761h1v1h-1zM186 755h1v1h-1zM186 760h1v1h-1zM187 752h1v1h-1zM187 755h1v1h-1zM187 758h1v1h-1zM188 740h1v1h-1zM188 756h1v1h-1zM188 766h1v1h-1zM189 760h1v1h-1zM190 756h1v1h-1zM190 758h1v1h-1zM190 759h1v1h-1zM191 755h1v1h-1zM191 758h1v1h-1zM191 760h1v1h-1zM191 763h1v1h-1zM191 766h1v1h-1zM192 753h1v1h-1zM192 756h1v1h-1zM192 757h1v1h-1zM192 763h1v1h-1zM194 759h1v1h-1zM194 760h1v1h-1zM195 756h1v1h-1zM195 760h1v1h-1zM196 749h1v1h-1zM196 758h1v1h-1zM196 761h1v1h-1zM197 754h1v1h-1zM197 759h1v1h-1zM197 760h1v1h-1zM198 753h1v1h-1zM198 758h1v1h-1zM198 760h1v1h-1zM199 757h1v1h-1zM199 760h1v1h-1zM200 607h1v1h-1zM200 760h1v1h-1zM201 756h1v1h-1zM201 761h1v1h-1zM203 754h1v1h-1zM203 760h1v1h-1zM204 755h1v1h-1zM205 752h1v1h-1zM205 757h1v1h-1zM205 760h1v1h-1zM206 757h1v1h-1zM206 762h1v1h-1zM206 765h1v1h-1zM208 757h1v1h-1zM208 758h1v1h-1zM209 747h1v1h-1zM210 758h1v1h-1zM210 761h1v1h-1zM211 754h1v1h-1zM211 755h1v1h-1zM211 759h1v1h-1zM212 760h1v1h-1zM212 762h1v1h-1zM213 756h1v1h-1zM214 747h1v1h-1zM215 757h1v1h-1zM215 758h1v1h-1zM216 755h1v1h-1zM216 757h1v1h-1zM217 754h1v1h-1zM218 754h1v1h-1zM218 755h1v1h-1zM218 756h1v1h-1zM218 757h1v1h-1zM219 758h1v1h-1zM219 762h1v1h-1zM220 753h1v1h-1zM220 755h1v1h-1zM220 757h1v1h-1zM220 759h1v1h-1zM220 761h1v1h-1zM221 752h1v1h-1zM221 762h1v1h-1zM222 758h1v1h-1zM222 762h1v1h-1zM223 632h1v1h-1zM223 753h1v1h-1zM223 756h1v1h-1zM223 757h1v1h-1zM223 763h1v1h-1zM224 631h1v1h-1zM224 759h1v1h-1zM224 760h1v1h-1zM225 757h1v1h-1zM226 762h1v1h-1zM227 754h1v1h-1zM227 755h1v1h-1zM227 758h1v1h-1zM228 760h1v1h-1zM229 758h1v1h-1zM230 756h1v1h-1zM230 759h1v1h-1zM230 760h1v1h-1zM230 762h1v1h-1zM230 763h1v1h-1zM231 758h1v1h-1zM231 761h1v1h-1zM232 761h1v1h-1zM232 763h1v1h-1zM233 754h1v1h-1zM233 764h1v1h-1zM234 753h1v1h-1zM234 759h1v1h-1zM235 757h1v1h-1zM235 758h1v1h-1zM235 762h1v1h-1zM236 753h1v1h-1zM236 756h1v1h-1zM236 758h1v1h-1zM236 760h1v1h-1zM237 751h1v1h-1zM238 763h1v1h-1zM239 751h1v1h-1zM239 758h1v1h-1zM239 759h1v1h-1zM240 757h1v1h-1zM240 763h1v1h-1zM241 759h1v1h-1zM241 764h1v1h-1zM243 755h1v1h-1zM243 758h1v1h-1zM243 759h1v1h-1zM245 754h1v1h-1zM245 758h1v1h-1zM245 759h1v1h-1zM246 758h1v1h-1zM247 759h1v1h-1zM248 756h1v1h-1zM248 757h1v1h-1zM250 751h1v1h-1zM250 757h1v1h-1zM250 760h1v1h-1zM251 760h1v1h-1zM252 757h1v1h-1zM252 759h1v1h-1zM253 760h1v1h-1zM254 760h1v1h-1zM255 763h1v1h-1zM256 760h1v1h-1zM257 759h1v1h-1zM258 759h1v1h-1zM260 753h1v1h-1zM260 757h1v1h-1zM260 761h1v1h-1zM261 759h1v1h-1zM261 761h1v1h-1zM263 759h1v1h-1zM263 760h1v1h-1zM264 756h1v1h-1zM264 759h1v1h-1zM264 760h1v1h-1zM265 666h1v1h-1zM265 755h1v1h-1zM265 757h1v1h-1zM265 760h1v1h-1zM265 761h1v1h-1zM266 754h1v1h-1zM267 759h1v1h-1zM269 633h1v1h-1zM269 759h1v1h-1zM269 760h1v1h-1zM270 759h1v1h-1zM271 761h1v1h-1zM272 600h1v1h-1zM272 756h1v1h-1zM272 758h1v1h-1zM273 753h1v1h-1zM273 760h1v1h-1zM273 761h1v1h-1zM274 751h1v1h-1zM274 760h1v1h-1zM276 758h1v1h-1zM277 757h1v1h-1zM278 755h1v1h-1zM279 743h1v1h-1zM279 758h1v1h-1zM280 756h1v1h-1zM280 758h1v1h-1zM280 761h1v1h-1zM281 755h1v1h-1zM281 759h1v1h-1zM282 757h1v1h-1zM283 760h1v1h-1zM284 759h1v1h-1zM285 754h1v1h-1zM286 761h1v1h-1zM287 753h1v1h-1zM288 761h1v1h-1zM289 755h1v1h-1zM289 756h1v1h-1zM289 761h1v1h-1zM290 758h1v1h-1zM290 759h1v1h-1zM291 757h1v1h-1zM291 758h1v1h-1zM291 761h1v1h-1zM292 751h1v1h-1zM292 757h1v1h-1zM292 760h1v1h-1zM293 755h1v1h-1zM293 760h1v1h-1zM295 752h1v1h-1zM295 768h1v1h-1zM296 754h1v1h-1zM298 766h1v1h-1zM300 754h1v1h-1zM301 758h1v1h-1zM301 759h1v1h-1zM302 750h1v1h-1zM302 757h1v1h-1zM302 760h1v1h-1zM302 761h1v1h-1zM302 762h1v1h-1zM302 763h1v1h-1zM303 756h1v1h-1zM303 766h1v1h-1zM304 753h1v1h-1zM304 756h1v1h-1zM305 759h1v1h-1zM306 752h1v1h-1zM306 758h1v1h-1zM307 756h1v1h-1zM307 761h1v1h-1zM310 760h1v1h-1zM311 758h1v1h-1zM312 761h1v1h-1zM312 762h1v1h-1zM313 753h1v1h-1zM313 757h1v1h-1zM315 758h1v1h-1zM316 758h1v1h-1zM316 761h1v1h-1zM316 764h1v1h-1zM317 751h1v1h-1zM317 758h1v1h-1zM319 759h1v1h-1zM320 759h1v1h-1zM320 760h1v1h-1zM321 754h1v1h-1zM322 757h1v1h-1zM323 756h1v1h-1zM323 762h1v1h-1zM324 756h1v1h-1zM325 751h1v1h-1zM326 755h1v1h-1zM326 759h1v1h-1zM326 761h1v1h-1zM326 764h1v1h-1zM327 757h1v1h-1zM327 763h1v1h-1zM327 765h1v1h-1zM328 757h1v1h-1zM330 757h1v1h-1zM330 759h1v1h-1zM331 756h1v1h-1zM331 759h1v1h-1zM332 758h1v1h-1zM332 759h1v1h-1zM333 756h1v1h-1zM333 759h1v1h-1zM333 760h1v1h-1zM334 605h1v1h-1zM334 757h1v1h-1zM335 757h1v1h-1zM335 759h1v1h-1zM336 754h1v1h-1zM337 753h1v1h-1zM337 759h1v1h-1zM337 761h1v1h-1zM338 757h1v1h-1zM339 753h1v1h-1zM339 761h1v1h-1zM340 756h1v1h-1zM340 760h1v1h-1zM340 763h1v1h-1zM341 763h1v1h-1zM342 756h1v1h-1zM342 763h1v1h-1zM343 758h1v1h-1zM343 761h1v1h-1zM344 766h1v1h-1zM347 760h1v1h-1zM349 758h1v1h-1zM350 757h1v1h-1zM350 762h1v1h-1zM351 629h1v1h-1zM352 759h1v1h-1zM352 761h1v1h-1zM353 667h1v1h-1zM353 755h1v1h-1zM353 756h1v1h-1zM353 759h1v1h-1zM353 760h1v1h-1zM354 762h1v1h-1zM354 763h1v1h-1zM355 752h1v1h-1zM355 759h1v1h-1zM355 761h1v1h-1zM359 756h1v1h-1zM360 757h1v1h-1zM362 757h1v1h-1zM362 768h1v1h-1zM364 756h1v1h-1zM365 753h1v1h-1zM365 758h1v1h-1zM365 759h1v1h-1zM367 760h1v1h-1zM367 761h1v1h-1zM367 763h1v1h-1zM368 757h1v1h-1zM369 741h1v1h-1zM369 758h1v1h-1zM369 759h1v1h-1zM370 762h1v1h-1zM370 765h1v1h-1zM371 762h1v1h-1zM371 763h1v1h-1zM372 757h1v1h-1zM373 756h1v1h-1zM374 760h1v1h-1zM375 750h1v1h-1zM376 757h1v1h-1zM379 611h1v1h-1zM379 755h1v1h-1zM379 757h1v1h-1zM379 759h1v1h-1zM380 758h1v1h-1zM380 767h1v1h-1zM381 759h1v1h-1zM382 761h1v1h-1zM383 756h1v1h-1zM383 757h1v1h-1zM383 759h1v1h-1zM384 756h1v1h-1zM385 759h1v1h-1zM385 760h1v1h-1zM385 761h1v1h-1zM386 757h1v1h-1zM386 759h1v1h-1zM386 761h1v1h-1zM387 756h1v1h-1zM388 638h1v1h-1zM388 748h1v1h-1zM388 751h1v1h-1zM388 759h1v1h-1zM389 691h1v1h-1zM389 755h1v1h-1zM389 760h1v1h-1zM390 758h1v1h-1zM391 752h1v1h-1zM391 759h1v1h-1zM391 765h1v1h-1zM392 736h1v1h-1zM393 752h1v1h-1zM393 756h1v1h-1zM394 762h1v1h-1zM395 668h1v1h-1zM395 755h1v1h-1zM395 758h1v1h-1zM396 752h1v1h-1zM396 763h1v1h-1zM396 765h1v1h-1zM397 759h1v1h-1zM398 756h1v1h-1zM398 767h1v1h-1zM399 758h1v1h-1zM399 763h1v1h-1zM400 756h1v1h-1zM401 758h1v1h-1zM402 758h1v1h-1zM403 759h1v1h-1zM403 760h1v1h-1zM404 754h1v1h-1zM404 757h1v1h-1zM404 759h1v1h-1zM405 756h1v1h-1zM405 762h1v1h-1zM405 763h1v1h-1zM407 752h1v1h-1zM407 760h1v1h-1zM407 762h1v1h-1zM407 763h1v1h-1zM409 759h1v1h-1zM409 762h1v1h-1zM410 764h1v1h-1zM411 760h1v1h-1zM412 758h1v1h-1zM413 761h1v1h-1zM413 763h1v1h-1zM414 719h1v1h-1zM414 766h1v1h-1zM415 759h1v1h-1zM416 759h1v1h-1zM417 741h1v1h-1zM417 760h1v1h-1zM418 634h1v1h-1zM418 760h1v1h-1zM419 612h1v1h-1zM419 754h1v1h-1zM419 756h1v1h-1zM419 757h1v1h-1zM420 763h1v1h-1zM422 756h1v1h-1zM422 761h1v1h-1zM424 762h1v1h-1zM425 751h1v1h-1zM425 756h1v1h-1zM427 757h1v1h-1zM428 760h1v1h-1zM430 755h1v1h-1zM431 757h1v1h-1zM432 754h1v1h-1zM433 757h1v1h-1zM434 759h1v1h-1zM435 722h1v1h-1zM435 730h1v1h-1zM435 766h1v1h-1zM436 756h1v1h-1zM437 760h1v1h-1zM438 761h1v1h-1zM439 764h1v1h-1zM439 766h1v1h-1zM441 694h1v1h-1zM441 700h1v1h-1zM441 758h1v1h-1zM442 756h1v1h-1zM442 759h1v1h-1zM442 760h1v1h-1zM442 763h1v1h-1zM443 760h1v1h-1zM444 638h1v1h-1zM445 754h1v1h-1zM445 759h1v1h-1zM446 756h1v1h-1zM447 756h1v1h-1zM447 757h1v1h-1zM447 758h1v1h-1zM447 760h1v1h-1zM447 761h1v1h-1zM448 760h1v1h-1zM448 761h1v1h-1zM449 763h1v1h-1zM450 756h1v1h-1zM450 758h1v1h-1zM452 758h1v1h-1zM452 759h1v1h-1zM452 762h1v1h-1zM453 743h1v1h-1zM453 748h1v1h-1zM453 750h1v1h-1zM453 756h1v1h-1zM453 759h1v1h-1zM454 759h1v1h-1zM454 760h1v1h-1zM455 753h1v1h-1zM457 758h1v1h-1zM457 760h1v1h-1zM457 761h1v1h-1zM457 764h1v1h-1zM459 754h1v1h-1zM459 768h1v1h-1zM460 755h1v1h-1zM460 759h1v1h-1zM460 761h1v1h-1zM461 767h1v1h-1zM462 764h1v1h-1zM465 760h1v1h-1zM466 753h1v1h-1zM468 608h1v1h-1zM468 752h1v1h-1zM470 751h1v1h-1zM471 760h1v1h-1zM473 751h1v1h-1zM473 756h1v1h-1zM474 761h1v1h-1zM475 759h1v1h-1zM477 756h1v1h-1zM477 757h1v1h-1zM477 759h1v1h-1zM478 758h1v1h-1zM478 759h1v1h-1zM479 763h1v1h-1zM479 767h1v1h-1zM480 586h1v1h-1zM480 750h1v1h-1zM480 759h1v1h-1zM482 754h1v1h-1zM483 758h1v1h-1zM483 759h1v1h-1zM483 762h1v1h-1zM484 760h1v1h-1zM484 764h1v1h-1zM485 757h1v1h-1zM485 765h1v1h-1zM486 763h1v1h-1zM486 765h1v1h-1zM486 766h1v1h-1zM487 748h1v1h-1zM488 754h1v1h-1zM490 749h1v1h-1zM490 758h1v1h-1zM491 760h1v1h-1zM492 759h1v1h-1zM493 753h1v1h-1zM493 756h1v1h-1zM493 758h1v1h-1zM498 696h1v1h-1zM498 759h1v1h-1zM500 756h1v1h-1zM500 757h1v1h-1zM501 757h1v1h-1zM503 758h1v1h-1zM505 758h1v1h-1zM505 912h1v1h-1zM506 757h1v1h-1zM507 757h1v1h-1zM507 764h1v1h-1zM509 639h1v1h-1zM509 756h1v1h-1zM509 757h1v1h-1zM510 754h1v1h-1zM510 759h1v1h-1zM512 768h1v1h-1zM513 756h1v1h-1zM513 757h1v1h-1zM513 758h1v1h-1zM513 760h1v1h-1zM513 766h1v1h-1zM516 754h1v1h-1zM516 758h1v1h-1zM516 759h1v1h-1zM519 764h1v1h-1zM519 765h1v1h-1zM521 759h1v1h-1zM524 755h1v1h-1zM524 757h1v1h-1zM525 613h1v1h-1zM527 762h1v1h-1zM529 760h1v1h-1zM530 757h1v1h-1zM530 762h1v1h-1zM531 756h1v1h-1zM532 761h1v1h-1zM535 753h1v1h-1zM540 755h1v1h-1zM541 759h1v1h-1zM543 752h1v1h-1zM543 763h1v1h-1zM544 756h1v1h-1zM545 635h1v1h-1zM545 754h1v1h-1zM546 760h1v1h-1zM547 756h1v1h-1zM548 756h1v1h-1zM550 686h1v1h-1zM550 756h1v1h-1zM551 759h1v1h-1zM552 758h1v1h-1zM553 753h1v1h-1zM554 733h1v1h-1zM555 758h1v1h-1zM556 761h1v1h-1zM557 755h1v1h-1zM559 758h1v1h-1zM561 756h1v1h-1zM561 759h1v1h-1zM561 760h1v1h-1zM562 738h1v1h-1zM562 759h1v1h-1zM565 760h1v1h-1zM565 763h1v1h-1zM566 753h1v1h-1zM568 757h1v1h-1zM568 762h1v1h-1zM569 758h1v1h-1zM575 755h1v1h-1zM578 756h1v1h-1zM578 763h1v1h-1zM579 711h1v1h-1zM592 739h1v1h-1zM595 634h1v1h-1zM596 757h1v1h-1zM597 756h1v1h-1zM597 758h1v1h-1zM597 761h1v1h-1zM608 762h1v1h-1zM609 759h1v1h-1zM609 762h1v1h-1zM610 757h1v1h-1zM611 758h1v1h-1zM612 759h1v1h-1zM613 753h1v1h-1zM616 755h1v1h-1zM618 759h1v1h-1zM622 757h1v1h-1zM623 759h1v1h-1zM628 755h1v1h-1zM629 759h1v1h-1zM630 755h1v1h-1zM632 758h1v1h-1zM636 756h1v1h-1zM636 762h1v1h-1zM637 755h1v1h-1zM637 758h1v1h-1zM645 765h1v1h-1zM646 756h1v1h-1zM650 755h1v1h-1zM653 758h1v1h-1zM655 606h1v1h-1zM659 760h1v1h-1zM661 756h1v1h-1zM664 754h1v1h-1zM667 605h1v1h-1zM667 755h1v1h-1zM667 756h1v1h-1zM668 757h1v1h-1zM671 747h1v1h-1zM671 896h1v1h-1zM672 758h1v1h-1zM673 759h1v1h-1zM677 755h1v1h-1zM677 756h1v1h-1zM677 758h1v1h-1zM678 754h1v1h-1zM679 760h1v1h-1zM680 757h1v1h-1zM681 758h1v1h-1zM685 755h1v1h-1zM686 757h1v1h-1zM686 760h1v1h-1zM688 753h1v1h-1zM688 759h1v1h-1zM688 763h1v1h-1zM695 755h1v1h-1zM701 757h1v1h-1zM702 751h1v1h-1zM703 756h1v1h-1zM706 760h1v1h-1zM708 759h1v1h-1zM718 759h1v1h-1zM722 757h1v1h-1zM724 757h1v1h-1zM727 755h1v1h-1zM728 748h1v1h-1zM730 756h1v1h-1zM731 753h1v1h-1zM731 758h1v1h-1zM733 754h1v1h-1zM733 758h1v1h-1zM734 756h1v1h-1zM735 753h1v1h-1zM735 759h1v1h-1zM737 757h1v1h-1zM739 759h1v1h-1zM742 755h1v1h-1zM743 752h1v1h-1zM747 759h1v1h-1zM748 760h1v1h-1zM749 753h1v1h-1zM750 759h1v1h-1zM753 759h1v1h-1zM755 754h1v1h-1zM757 757h1v1h-1zM758 758h1v1h-1zM763 757h1v1h-1zM765 761h1v1h-1zM768 754h1v1h-1z" fill="#e6e600"/>
<polyline points="54.6,301.6 57.5,296.5 61.5,309.4 65.7,293.4 67.6,280.2 69.5,265.4 70.7,300.3 72.6,336.5 74.5,296.5 76.6,271.4 80.1,281.5 82.9,312.9 84.5,330.4 86.4,280.2 87.7,269.2 92.1,281.5 95.8,280.2 99.6,260.4 101.5,287.8 106.5,317.6 114.6,268.3 118.4,284.0 129.1,336.5 133.5,271.4 136.6,277.7 138.5,306.6 140.6,353.7 142.6,294.0 144.4,258.3 146.0,265.2 148.5,275.8 151.7,275.8 155.4,291.5 159.8,264.5 163.6,267.7 164.9,281.5 166.7,309.4 170.0,304.1 171.9,285.3 174.6,262.4 178.5,279.6 185.3,271.7 189.5,302.6 192.8,285.0 197.9,283.0 200.8,276.5 204.1,261.7 208.3,261.7 212.7,269.6 215.4,304.7 217.7,279.0 219.6,262.4 223.7,276.5 227.5,268.3 230.9,273.3 234.3,262.4 235.9,280.2 238.4,314.7 240.5,280.2 242.4,259.1 245.3,271.4 249.5,253.6 252.8,265.2 257.6,272.7 260.6,270.8 264.5,264.5 268.5,273.3 271.7,306.6 276.4,322.3 278.2,281.5 279.5,264.5 281.1,284.0 283.3,315.6 286.7,284.0 288.0,279.6 290.0,278.7 291.5,278.3 294.6,260.4 296.3,275.2 298.5,299.7 300.7,284.0 302.6,273.3 306.3,289.6 309.7,258.3 313.2,272.4 317.4,269.2 321.4,276.5 324.5,265.4 328.0,271.4 330.2,253.9 332.3,231.0 336.4,234.4 337.7,250.1 340.5,286.5 342.1,250.1 343.6,229.0 344.6,257.6 347.5,311.0 350.9,272.7 355.3,261.4 358.7,277.5 362.4,270.2 366.6,280.5 370.6,261.4 372.8,272.1 377.6,277.1 381.4,315.6 383.5,281.5 385.4,256.1 386.7,275.2 388.5,299.7 392.9,280.2 396.4,272.4 400.7,281.5 404.5,280.2 407.6,257.4 410.0,270.2 411.3,279.6 415.6,260.4 422.3,282.7 426.3,274.6 428.8,290.3 434.5,319.8 436.4,295.3 437.6,276.2 441.4,273.3 445.8,263.3 449.5,278.3 452.7,273.7 456.7,285.5 460.6,258.3 464.9,276.2 468.4,269.6 471.5,276.5 475.0,300.9 479.0,300.3 483.4,318.5 485.3,292.8 486.6,268.3 490.6,261.4 494.4,301.6 498.5,277.5 501.9,293.4 505.4,263.3 509.8,277.5 513.6,268.3 515.4,290.3 520.5,343.6 522.3,305.3 523.6,279.0 524.6,269.2 528.0,277.1 530.0,275.2 535.6,257.4 539.4,287.8 543.6,307.8 545.7,281.5 550.7,253.6 554.5,274.6 558.9,279.0 562.6,299.7 565.8,263.3 570.2,269.6 573.3,277.1 577.4,319.8 580.2,285.9 584.2,281.5 588.6,312.9 592.4,272.4 595.5,301.6 598.8,282.7 603.8,273.3 607.6,286.5 611.6,259.1 614.1,271.4 618.5,307.8 622.9,296.5 626.4,269.2 629.5,300.9 633.6,280.2 637.7,301.8 641.5,268.3 644.0,274.2 650.0,277.5 652.5,281.5 656.5,295.3 659.4,273.3 663.6,283.4 667.6,276.5 671.6,258.3 675.5,284.6 678.6,271.4 682.6,288.4 686.7,270.4 690.4,282.7 693.9,275.2 697.4,272.4 701.5,262.7 704.6,261.4 706.5,263.9 712.4,278.3 716.5,265.4 720.9,272.1 723.4,270.8 725.3,286.5 727.6,314.7 729.7,277.7 731.6,253.2 733.5,277.7 735.6,303.8 739.4,277.1 746.4,265.4 750.4,277.1 754.4,271.7 757.6,296.5 761.5,257.4 765.5,291.5 768.3,277.1 772.1,272.4 776.5,300.9 779.6,278.3 781.5,275.8 784.6,274.6 788.4,269.6 791.5,268.3 795.3,277.5 799.1,263.9 801.0,263.0 802.8,264.5" fill="none" stroke="#19b6f2" stroke-width="1" stroke-linejoin="miter" shape-rendering="crispEdges"/>
</svg>
<div class="ax" style="left:0;width:49px;text-align:right;top:143px">450</div>
<div class="ax" style="left:0;width:49px;text-align:right;top:235px">400</div>
<div class="ax" style="left:0;width:49px;text-align:right;top:327px">350</div>
<div class="ax" style="left:0;width:49px;text-align:right;top:419px">300</div>
<div class="ax" style="left:0;width:49px;text-align:right;top:511px">250</div>
<div class="ax" style="left:0;width:49px;text-align:right;top:603px">200</div>
<div class="ax" style="left:0;width:49px;text-align:right;top:695px">150</div>
<div class="ax" style="left:0;width:49px;text-align:right;top:787px">100</div>
<div class="ax" style="left:0;width:49px;text-align:right;top:879px">50</div>
<div class="ax" style="left:808px;top:143px">0.45</div>
<div class="ax" style="left:808px;top:235px">0.40</div>
<div class="ax" style="left:808px;top:327px">0.35</div>
<div class="ax" style="left:808px;top:419px">0.30</div>
<div class="ax" style="left:808px;top:511px">0.25</div>
<div class="ax" style="left:808px;top:603px">0.20</div>
<div class="ax" style="left:808px;top:695px">0.15</div>
<div class="ax" style="left:808px;top:787px">0.10</div>
<div class="ax" style="left:808px;top:879px">0.05</div>
<div class="ax" style="left:34px;width:41px;text-align:center;top:982px">0</div>
<div class="ax" style="left:108px;width:41px;text-align:center;top:982px">12</div>
<div class="ax" style="left:183px;width:41px;text-align:center;top:982px">24</div>
<div class="ax" style="left:258px;width:41px;text-align:center;top:982px">36</div>
<div class="ax" style="left:333px;width:41px;text-align:center;top:982px">48</div>
<div class="ax" style="left:408px;width:41px;text-align:center;top:982px">60</div>
<div class="ax" style="left:483px;width:41px;text-align:center;top:982px">72</div>
<div class="ax" style="left:558px;width:41px;text-align:center;top:982px">84</div>
<div class="ax" style="left:633px;width:41px;text-align:center;top:982px">96</div>
<div class="ax" style="left:708px;width:41px;text-align:center;top:982px">108</div>
<div class="ax" style="left:773px;width:60px;text-align:center;top:982px">120gB</div>
<div class="ax" style="left:54px;top:136px">MB/s</div>
<div class="ax" style="left:789px;top:136px">ms</div>

<!-- right panel -->
<div style="left:846px;top:131px;width:73px;height:21px;border:1px solid #3c7fb1;border-radius:3px;background:linear-gradient(#eaf6fd 0,#d9f0fc 48%,#bee6fd 52%,#a7d9f5 100%);box-shadow:inset 0 0 0 1px rgba(255,255,255,.7)"></div>
<div class="sep" style="top:162px"></div>
<svg class="a" style="left:841px;top:168px" width="14" height="14"><defs><radialGradient id="rg" cx=".4" cy=".35" r=".65"><stop offset="0" stop-color="#58c8f4"/><stop offset=".55" stop-color="#1a86c8"/><stop offset="1" stop-color="#0e3058"/></radialGradient><linearGradient id="rb" x1="0" y1="0" x2="1" y2="1"><stop offset="0" stop-color="#c4c8cc"/><stop offset="1" stop-color="#fafafa"/></linearGradient></defs><circle cx="7" cy="7" r="5.600" fill="#fdfdfd" stroke="#8a8b8c" stroke-width="1"/><circle cx="7" cy="7" r="4" fill="url(#rb)" stroke="#b8bbbe" stroke-width=".7"/><circle cx="7" cy="7" r="3.100" fill="url(#rg)"/></svg>
<svg class="a" style="left:841px;top:184px" width="14" height="14"><circle cx="7" cy="7" r="5.600" fill="#fdfdfd" stroke="#8a8b8c" stroke-width="1"/><circle cx="7" cy="7" r="4" fill="url(#rb)" stroke="#b8bbbe" stroke-width=".7"/></svg>
<div class="sep" style="top:201px"></div>
<div class="cb" style="top:209px"><i></i></div>
<div style="left:842px;top:229px;width:62px;height:20px;border:1px solid #abadb3;background:#fff"></div>
<div style="left:886px;top:231px;width:16px;height:8px;border:1px solid #c9c9c9;background:linear-gradient(#f4f4f4,#e4e4e4)"></div>
<div style="left:886px;top:239px;width:16px;height:8px;border:1px solid #c9c9c9;background:linear-gradient(#f0f0f0,#dedede)"></div>
<svg class="a" style="left:891px;top:233px" width="7" height="4"><path d="M1 3.500l2.500-2.500 2.500 2.500z" fill="#8a8a8a"/></svg>
<svg class="a" style="left:891px;top:241px" width="7" height="4"><path d="M1 .5l2.500 2.500 2.500-2.500z" fill="#8a8a8a"/></svg>
<div class="cb" style="top:258px"><i></i><svg class="a" style="left:1px;top:0.500px" width="10" height="10"><path d="M1.700 4.800l2.300 3.300 3.800-6.800" fill="none" stroke="#3f53a3" stroke-width="2"/></svg></div>
<div class="sep" style="top:273px"></div>
<div class="bb" style="top:291px"></div>
<div class="bb" style="top:323px"></div>
<div class="bb" style="top:354px"></div>
<div class="sep" style="top:377px"></div>
<div class="cb" style="top:383px"><i></i><svg class="a" style="left:1px;top:0.500px" width="10" height="10"><path d="M1.700 4.800l2.300 3.300 3.800-6.800" fill="none" stroke="#3f53a3" stroke-width="2"/></svg></div>
<div class="bb" style="top:398px"></div>
<div class="cb" style="top:417px"><i></i><svg class="a" style="left:1px;top:0.500px" width="10" height="10"><path d="M1.700 4.800l2.300 3.300 3.800-6.800" fill="none" stroke="#3f53a3" stroke-width="2"/></svg></div>
<div class="bb" style="top:432px"></div>
<div class="bb" style="top:465px"></div>

<div style="left:30px;top:8px;font-size:12px;line-height:14px;color:#000;">HD Tune Pro 5.00 - Hard Disk Utility</div>
<div style="left:16px;top:33px;font-size:12px;line-height:14px;color:#000;transform:scaleX(0.9711);transform-origin:0 0;"><u>F</u>ile</div>
<div style="left:52px;top:33px;font-size:12px;line-height:14px;color:#000;transform:scaleX(0.9884);transform-origin:0 0;"><u>H</u>elp</div>
<div style="left:23px;top:63px;font-size:11.5px;line-height:12px;color:#000;transform:scaleX(1.0546);transform-origin:0 0;">ATA</div>
<div style="left:60px;top:63px;font-size:11.5px;line-height:12px;color:#000;transform:scaleX(0.9143);transform-origin:0 0;">SPCC SSD101</div>
<div style="left:148px;top:63px;font-size:11.5px;line-height:12px;color:#000;transform:scaleX(0.9340);transform-origin:0 0;">(120 gB)</div>
<div style="left:651px;top:63px;font-size:12px;line-height:14px;color:#000;font-weight:bold;transform:scaleX(1.0294);transform-origin:0 0;">27&deg;C</div>
<div style="left:906px;top:63px;font-size:11.5px;line-height:12px;color:#000;transform:scaleX(0.8711);transform-origin:0 0;">Exit</div>
<div style="left:51px;top:101px;font-size:11.5px;line-height:12px;color:#000;transform:scaleX(0.9231);transform-origin:0 0;">Benchmark</div>
<div style="left:140px;top:103px;font-size:11.5px;line-height:12px;color:#000;transform:scaleX(0.9381);transform-origin:0 0;">Info</div>
<div style="left:193px;top:103px;font-size:11.5px;line-height:12px;color:#000;transform:scaleX(0.9203);transform-origin:0 0;">Health</div>
<div style="left:259px;top:103px;font-size:11.5px;line-height:12px;color:#000;transform:scaleX(0.9096);transform-origin:0 0;">Error Scan</div>
<div style="left:344px;top:103px;font-size:11.5px;line-height:12px;color:#000;transform:scaleX(0.9023);transform-origin:0 0;">Folder Usage</div>
<div style="left:442px;top:103px;font-size:11.5px;line-height:12px;color:#000;transform:scaleX(0.8686);transform-origin:0 0;">Erase</div>
<div style="left:504px;top:103px;font-size:11.5px;line-height:12px;color:#000;transform:scaleX(0.8987);transform-origin:0 0;">File Benchmark</div>
<div style="left:612px;top:103px;font-size:11.5px;line-height:12px;color:#000;transform:scaleX(0.9123);transform-origin:0 0;">Disk monitor</div>
<div style="left:705px;top:103px;font-size:11.5px;line-height:12px;color:#000;transform:scaleX(0.9149);transform-origin:0 0;">AAM</div>
<div style="left:763px;top:103px;font-size:11.5px;line-height:12px;color:#000;transform:scaleX(0.9337);transform-origin:0 0;">Random Access</div>
<div style="left:876px;top:103px;font-size:11.5px;line-height:12px;color:#000;transform:scaleX(0.8964);transform-origin:0 0;">Extra tests</div>
<div style="left:871px;top:136px;font-size:11.5px;line-height:12px;color:#000;transform:scaleX(0.8931);transform-origin:0 0;">Start</div>
<div style="left:858px;top:169px;font-size:11.5px;line-height:12px;color:#000;transform:scaleX(0.9273);transform-origin:0 0;">Read</div>
<div style="left:858px;top:185px;font-size:11.5px;line-height:12px;color:#000;transform:scaleX(0.9202);transform-origin:0 0;">Write</div>
<div style="left:858px;top:210px;font-size:11.5px;line-height:12px;color:#000;transform:scaleX(0.9113);transform-origin:0 0;">Short stroke</div>
<div style="left:844px;top:233px;font-size:11.5px;line-height:12px;color:#8c8c8c;transform:scaleX(0.9377);transform-origin:0 0;">40</div>
<div style="left:914px;top:233px;font-size:11.5px;line-height:12px;color:#000;transform:scaleX(0.9802);transform-origin:0 0;">gB</div>
<div style="left:858px;top:259px;font-size:11.5px;line-height:12px;color:#000;transform:scaleX(0.9021);transform-origin:0 0;">Transfer rate</div>
<div style="left:842px;top:277px;font-size:11.5px;line-height:12px;color:#000;transform:scaleX(0.8619);transform-origin:0 0;">Minimum</div>
<div style="left:855px;top:292px;font-size:12px;line-height:14px;color:#14b2f2;font-weight:bold;transform:scaleX(1.0718);transform-origin:0 0;">339.2 MB/s</div>
<div style="left:842px;top:310px;font-size:11.5px;line-height:12px;color:#000;transform:scaleX(0.8727);transform-origin:0 0;">Maximum</div>
<div style="left:855px;top:324px;font-size:12px;line-height:14px;color:#14b2f2;font-weight:bold;transform:scaleX(1.0718);transform-origin:0 0;">406.8 MB/s</div>
<div style="left:842px;top:340px;font-size:11.5px;line-height:12px;color:#000;transform:scaleX(0.9310);transform-origin:0 0;">Average</div>
<div style="left:855px;top:355px;font-size:12px;line-height:14px;color:#14b2f2;font-weight:bold;transform:scaleX(1.0718);transform-origin:0 0;">379.0 MB/s</div>
<div style="left:858px;top:384px;font-size:11.5px;line-height:12px;color:#000;transform:scaleX(0.9113);transform-origin:0 0;">Access time</div>
<div style="left:863px;top:399px;font-size:12px;line-height:14px;color:#f6f600;font-weight:bold;transform:scaleX(1.0154);transform-origin:0 0;">0.123 ms</div>
<div style="left:858px;top:418px;font-size:11.5px;line-height:12px;color:#000;transform:scaleX(0.8925);transform-origin:0 0;">Burst rate</div>
<div style="left:855px;top:433px;font-size:12px;line-height:14px;color:#fff;font-weight:bold;transform:scaleX(1.0718);transform-origin:0 0;">350.1 MB/s</div>
<div style="left:842px;top:451px;font-size:11.5px;line-height:12px;color:#000;transform:scaleX(0.9182);transform-origin:0 0;">CPU usage</div>
<div style="left:875px;top:466px;font-size:12px;line-height:14px;color:#fff;font-weight:bold;transform:scaleX(1.0344);transform-origin:0 0;">2.8%</div>
<!-- watermark -->
<svg class="a" style="left:660px;top:970px" width="296" height="74" viewBox="660 970 296 74">
  <defs>
    <linearGradient id="wg" x1="0.3" y1="0" x2="0.6" y2="1"><stop offset="0" stop-color="#eef3fd"/><stop offset=".35" stop-color="#cfdaf8"/><stop offset=".55" stop-color="#b4c0f0"/><stop offset="1" stop-color="#a9b2e8"/></linearGradient>
    <linearGradient id="wt" x1="0" y1="0" x2="0" y2="1"><stop offset="0" stop-color="#98b0e4"/><stop offset="1" stop-color="#b4bcdc"/></linearGradient>
    <filter id="wb" x="-10%" y="-10%" width="120%" height="120%"><feGaussianBlur stdDeviation=".6"/></filter>
  </defs>
  <g opacity=".84">
    <path d="M692.5 980.500 L735 993.300 L723.300 1037 L672 1020.300z" fill="#cfd0d6" stroke="#cfd0d6" stroke-width="3" stroke-linejoin="round" filter="url(#wb)"/>
    <path d="M693 982 L733.500 994.300 L722.300 1035.300 L674 1019.500z" fill="url(#wg)" stroke="url(#wg)" stroke-width="1.500" stroke-linejoin="round"/>
    <path d="M694.200 996 L712 1017.300 M688.800 1011.200 L718.300 1001.400" stroke="#fff" stroke-width="3.600" stroke-linecap="round" fill="none"/>
  </g>
  <g transform="translate(738.2 1019.400) scale(0.771 1)">
    <text x="1.2" y="1.2" font-family="Liberation Sans, sans-serif" font-size="25" fill="#d4d4d8" filter="url(#wb)">xtremehardware.com</text>
    <text x="0" y="0" font-family="Liberation Sans, sans-serif" font-size="25" fill="url(#wt)">xtremehardware.com</text>
  </g>
</svg>
</body></html>
